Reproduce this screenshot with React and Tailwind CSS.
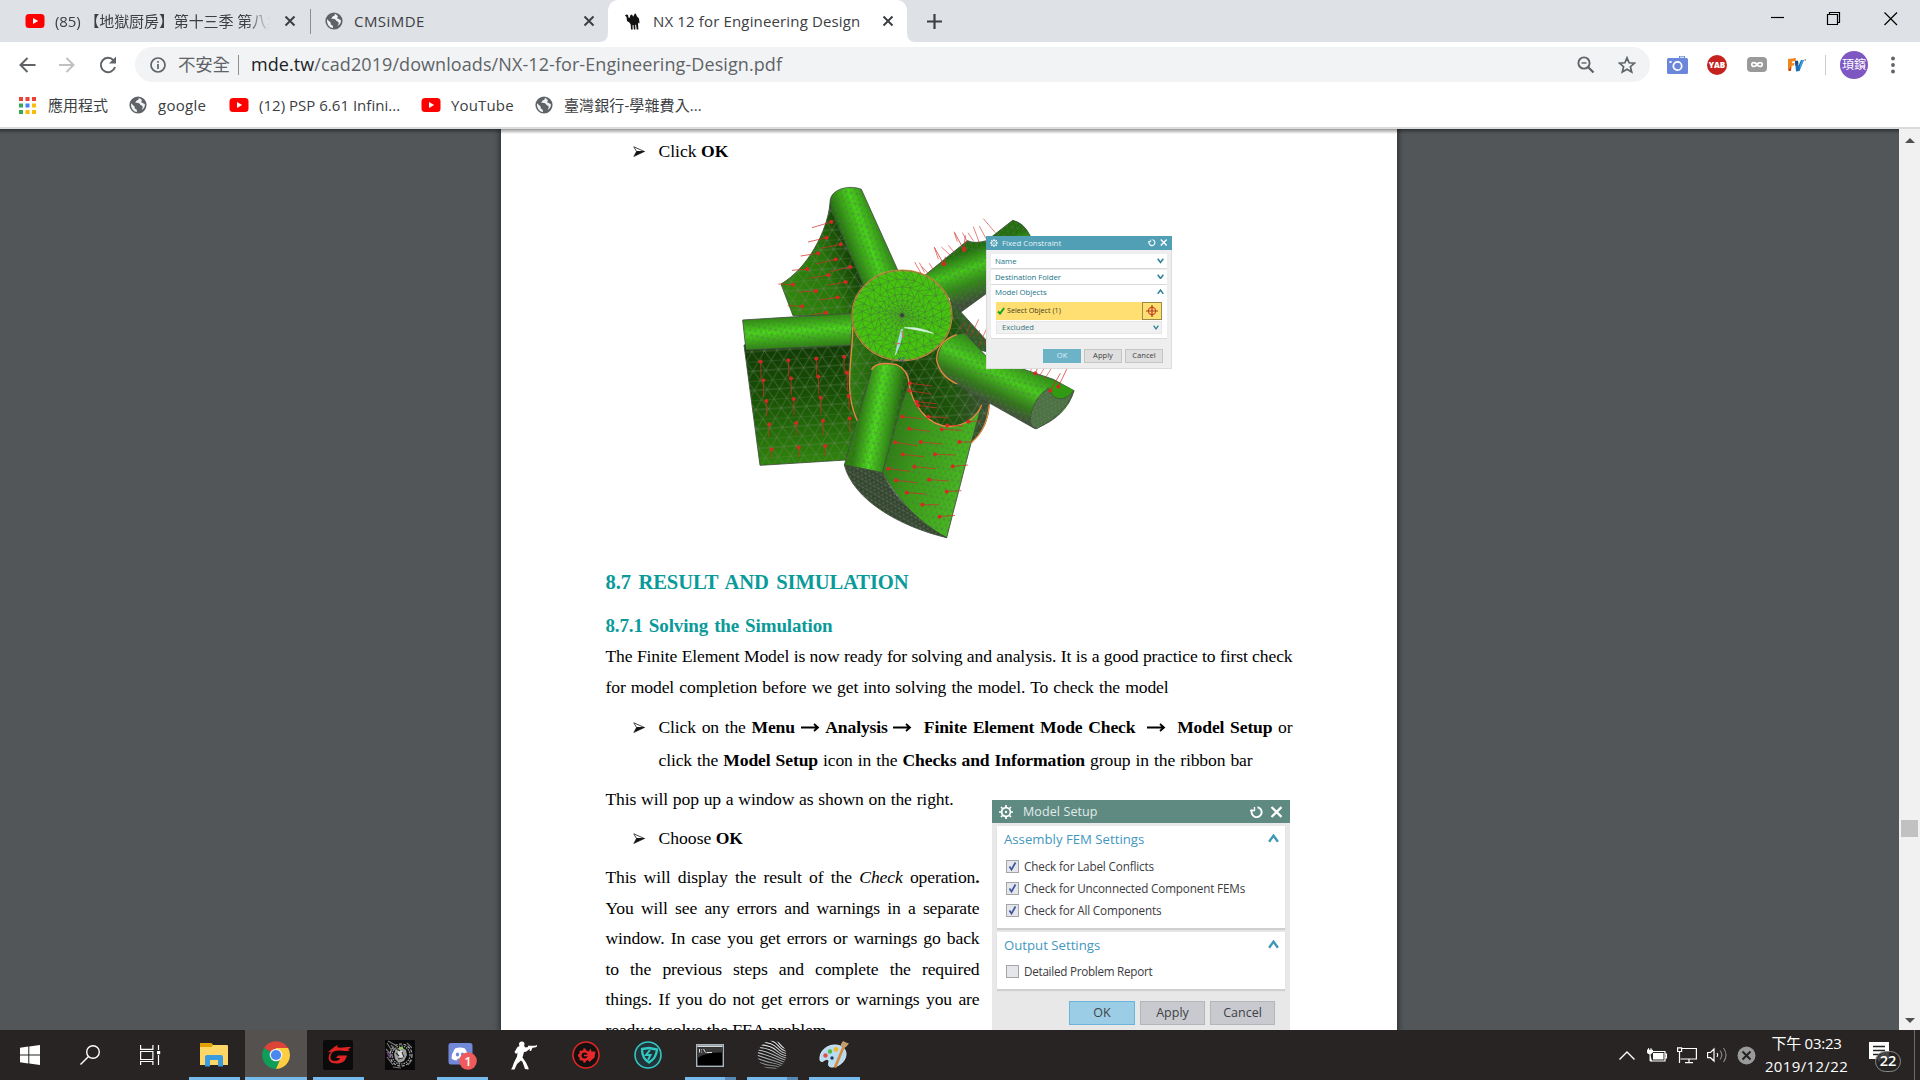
import React from "react";

/* ---------- shared icons ---------- */

const YouTube = ({ className = "" }) => (
  <svg className={className} width="20" height="16" viewBox="0 0 20 16">
    <rect x="0.5" y="1" width="19" height="14" rx="3.5" fill="#f00" />
    <path d="M8 5l5.2 3L8 11z" fill="#fff" />
  </svg>
);

const Globe = ({ className = "" }) => (
  <svg className={className} width="18" height="18" viewBox="0 0 18 18">
    <circle cx="9" cy="9" r="8.6" fill="#5f6368" />
    <path d="M2 7.2l3.6 3.4.2 2 2 1.2.2 2.2C4.2 15.600 1.600 12 2 7.200z" fill="#f1f3f4" />
    <path d="M9.500 1.800c1 1.200-.2 2.400-1.800 2.800-.8.300-.6 1.600-1.700 1.900 2 .5 4.600.3 5.200 2 .4 1.200 2.600.8 2.500 2.400-.1 1.500-1 2.500-1.600 3.300 2.800-1.300 4-3.700 3.800-6-1.100-.2-1.600-1.300-2.800-1.400-1.200-.2-1-1.500-.1-2.100-.9-1.700-2-2.500-3.500-2.900z" fill="#f1f3f4" />
  </svg>
);

const Close = ({ className = "" }) => (
  <svg className={className} width="12" height="12" viewBox="0 0 12 12">
    <path d="M1.500 1.500l9 9M10.500 1.500l-9 9" stroke="#3c4043" strokeWidth="2" fill="none" />
  </svg>
);

const Camel = ({ className = "" }) => (
  <svg className={className} width="15" height="17" viewBox="0 0 15 17">
    <path d="M0 2.500L1 1.500l2 .5.500 2.500 1 .5L5.500 2 7 1.500l1.200 2.200L9.800.5l1 .3L12 3.500l2 2 .6 5-1.100-1L13 11l.4 5.500h-1.700L11 11.500l-.8.500.2 4.500H8.800l-.3-4.500-1 .2.200 4.300H6l-.3-5-1.300-2L2 8 1.500 4z" fill="#111" />
  </svg>
);

/* ---------- browser chrome ---------- */

function TabStrip() {
  return (
    <div className="flex h-[42px] items-center bg-[#dee1e6] text-[15px] text-[#3c4043]">
      <div className="flex h-full w-[310px] shrink-0 items-center pl-[25px]">
        <YouTube />
        <div className="ml-[10px] w-[222px] overflow-hidden whitespace-nowrap tracking-[-0.1px] [mask-image:linear-gradient(to_right,#000_86%,transparent_97%)]">
          (85) 【地獄厨房】第十三季 第八集
        </div>
        <Close className="ml-[7px]" />
      </div>
      <div className="h-[25px] w-px bg-[#8b8f94]" />
      <div className="flex h-full w-[297px] shrink-0 items-center pl-[14px]">
        <Globe />
        <span className="ml-[11px] tracking-[0.45px]">CMSiMDE</span>
        <Close className="mr-[13px] ml-auto" />
      </div>
      <div className="relative flex h-full w-[299px] shrink-0 items-center rounded-t-[10px] bg-white pl-[17px]">
        <svg className="absolute bottom-0 -left-[9px]" width="9" height="9" viewBox="0 0 9 9"><path d="M9 0v9H0Q9 9 9 0z" fill="#fff" /></svg>
        <svg className="absolute -right-[9px] bottom-0" width="9" height="9" viewBox="0 0 9 9"><path d="M0 0v9h9Q0 9 0 0z" fill="#fff" /></svg>
        <Camel />
        <span className="ml-[13px] whitespace-nowrap tracking-[0.15px]">NX 12 for Engineering Design</span>
        <Close className="mr-[13px] ml-auto" />
      </div>
      <svg className="ml-[20px]" width="15" height="15" viewBox="0 0 15 15">
        <path d="M7.500 0v15M0 7.500h15" stroke="#3c4043" strokeWidth="2.200" />
      </svg>
      <svg className="mr-[22px] ml-auto h-[42px]" width="128" height="42" viewBox="0 0 128 42" fill="none" stroke="#000" strokeWidth="1.200">
        <path d="M1 17.500h13" />
        <path d="M57.500 14.500h10v10h-10zM59.500 14.500v-2h10v10h-2" />
        <path d="M114.500 12.500l12.500 12.500M127 12.500L114.500 25" />
      </svg>
    </div>
  );
}

function Toolbar() {
  return (
    <div className="flex h-[45px] shrink-0 items-center bg-white">
      <svg className="ml-[18px]" width="102" height="20" viewBox="0 0 102 20" fill="none" strokeWidth="2">
        <path d="M17.500 10H3M9.500 3L2.500 10l7 7" stroke="#5f6368" />
        <path d="M41 10h14.500M48.500 3l7 7-7 7" stroke="#bfc1c3" />
        <path d="M95.500 5.300A7.200 7.200 0 1 0 97 12" stroke="#5f6368" />
        <path d="M98 1.500v7h-7z" fill="#5f6368" />
      </svg>
      <div className="ml-[15px] flex h-[35px] w-[1515px] shrink-0 items-center rounded-full bg-[#f1f3f4] pl-[15px] text-[18px] text-[#5f6368]">
        <svg width="16" height="16" viewBox="0 0 16 16" fill="none" stroke="#5f6368" strokeWidth="1.700">
          <circle cx="8" cy="8" r="7" />
          <path d="M8 7v5M8 4v1.700" />
        </svg>
        <span className="ml-[12px] w-[53px] text-[17.500px] tracking-[-0.2px] whitespace-nowrap">不安全</span>
        <span className="ml-[7px] h-[20px] w-px bg-[#8b8f94]" />
        <span className="ml-[12px] whitespace-nowrap tracking-[0.08px]">
          <span className="text-[#202124]">mde.tw</span>/cad2019/downloads/NX-12-for-Engineering-Design.pdf
        </span>
        <svg className="mr-[23px] ml-auto" width="18" height="18" viewBox="0 0 18 18" fill="none" stroke="#5f6368" strokeWidth="1.900">
          <circle cx="7" cy="7" r="5.600" />
          <path d="M11 11l5.500 5.500" strokeWidth="2.300" />
          <path d="M4.500 7h5" strokeWidth="1.400" />
        </svg>
        <svg className="mr-[14px]" width="18" height="18" viewBox="0 0 18 18" fill="none" stroke="#5f6368" strokeWidth="1.700">
          <path d="M9 1.800l2.100 5 5.400.4-4.100 3.500 1.300 5.300L9 13.200 4.300 16l1.300-5.300L1.500 7.200l5.400-.4z" />
        </svg>
      </div>
      <svg className="ml-[17px]" width="21" height="18" viewBox="0 0 21 18">
        <path d="M12 0h6v3h-6z" fill="#6a8de0" />
        <rect x="0" y="2" width="21" height="16" rx="1.500" fill="#6b87dc" />
        <path d="M13 1.200h4" stroke="#fff" strokeWidth="1" />
        <circle cx="10.500" cy="10" r="4.200" fill="none" stroke="#fff" strokeWidth="1.700" />
        <rect x="2.500" y="5" width="2" height="2" fill="#fff" />
      </svg>
      <span className="ml-[19px] flex h-[20px] w-[20px] items-center justify-center rounded-full bg-[#c5221f] text-[8px] font-extrabold text-white">YAB</span>
      <svg className="ml-[20px]" width="20" height="15" viewBox="0 0 20 15">
        <rect width="20" height="15" rx="4" fill="#9a9a9a" />
        <path d="M10 7.500C8.500 5 4.800 4.800 4.800 7.500S8.500 10 10 7.500s5.200-2.700 5.200 0S11.500 10 10 7.500z" fill="none" stroke="#fff" strokeWidth="1.700" />
      </svg>
      <svg className="ml-[21px]" width="18" height="14" viewBox="0 0 18 14">
        <path d="M0 1l8-1-.3 3-3.500.4-.2 1.800 2.500-.2-.4 2.500-2.500.2L3 13 0 12.500z" fill="#f0861f" />
        <path d="M3.300 8l-.5 5-2.500-.4z" fill="#c23b1a" />
        <path d="M7 3l3-.3.400 5L13 2h3l-4.500 11-3.500.5z" fill="#1b6fb5" />
        <path d="M7 3l3-.3.300 3L7.500 8z" fill="#174d85" />
        <path d="M11.500 9L14 2h2l-4 9z" fill="#46a5dc" />
        <path d="M16.500 2H18" stroke="#555" />
      </svg>
      <span className="ml-[19px] h-[20px] w-px bg-[#c9cbce]" />
      <span className="ml-[14px] flex h-[28px] w-[28px] items-center justify-center overflow-hidden rounded-full bg-[#7e57c2] text-[12px] whitespace-nowrap text-white">頊鑌</span>
      <svg className="ml-[23px]" width="4" height="18" viewBox="0 0 4 18" fill="#5f6368">
        <circle cx="2" cy="2.500" r="1.900" /><circle cx="2" cy="9" r="1.900" /><circle cx="2" cy="15.500" r="1.900" />
      </svg>
    </div>
  );
}

function Bookmarks() {
  return (
    <div className="flex h-[40px] shrink-0 items-center bg-white pb-[4px] text-[15px] whitespace-nowrap text-[#3c4043]">
      <svg className="ml-[19px]" width="17" height="17" viewBox="0 0 17 17">
        <path d="M0 0h4v4H0zM6.500 0h4v4h-4zM13 0h4v4h-4z" fill="#ea4335" />
        <path d="M0 6.500h4v4H0zM0 13h4v4H0z" fill="#34a853" />
        <path d="M6.500 6.500h4v4h-4z" fill="#4285f4" />
        <path d="M13 6.500h4v4h-4zM6.500 13h4v4h-4zM13 13h4v4h-4z" fill="#fbbc05" />
      </svg>
      <span className="ml-[12px] w-[60px]">應用程式</span>
      <Globe className="ml-[21px]" />
      <span className="ml-[11px] w-[51px] tracking-[0.3px]">google</span>
      <YouTube className="ml-[20px]" />
      <span className="ml-[10px] w-[142px] tracking-[0.02px]">(12) PSP 6.61 Infini...</span>
      <YouTube className="ml-[20px]" />
      <span className="ml-[10px] w-[64px] tracking-[0.15px]">YouTube</span>
      <Globe className="ml-[20px]" />
      <span className="ml-[11px] tracking-[0.1px]">臺灣銀行-學雜費入...</span>
    </div>
  );
}

/* ---------- fan model figure ---------- */

const rings = [
  [0, 1], [9, 10], [20, 14], [33, 18], [50, 20], [70, 22], [94, 24], [120, 28], [149, 36],
];

function discMesh() {
  const point = (ring, i) => {
    const [r, n] = rings[ring];
    const a = ((i + (ring % 2) * 0.5) / n) * Math.PI * 2;
    return [546 + r * Math.cos(a), 436 + r * 0.905 * Math.sin(a)];
  };
  let d = "";
  for (let k = 1; k < rings.length; k++) {
    const n = rings[k][1];
    const inner = rings[k - 1][1];
    for (let i = 0; i < n; i++) {
      const p = point(k, i);
      const q = point(k, i + 1);
      d += `M${p[0].toFixed(1)} ${p[1].toFixed(1)}L${q[0].toFixed(1)} ${q[1].toFixed(1)}`;
      const t = (i / n) * inner;
      for (const j of [Math.floor(t), Math.ceil(t + 0.01)]) {
        const s = point(k - 1, j);
        d += `M${p[0].toFixed(1)} ${p[1].toFixed(1)}L${s[0].toFixed(1)} ${s[1].toFixed(1)}`;
      }
    }
  }
  return d;
}
const DISC = discMesh();

/* Each load arrow: head x, head y, tail dx, tail dy */
const loads = [
  [334, 156, -58, 17], [320, 203, -56, 13], [362, 223, -60, 12], [294, 250, -52, 8], [347, 268, -58, 14],
  [262, 297, -46, 4], [391, 291, -60, 14], [326, 315, -58, 10], [219, 344, -44, -2], [377, 336, -56, 10],
  [288, 363, -52, 3], [353, 382, -56, 8], [247, 409, -44, -2], [318, 428, -40, 6],
  [122, 575, 1, 50], [205, 571, 1, 50], [289, 566, 1, 52], [372, 560, 1, 52],
  [130, 631, 1, 50], [213, 625, 1, 52], [295, 620, 1, 54], [381, 608, 2, 56],
  [139, 693, 1, 46], [221, 687, 1, 48], [302, 683, 1, 50], [386, 678, 1, 42],
  [148, 763, -2, 38], [229, 759, 0, 38], [309, 752, 0, 44], [389, 745, 1, 40],
  [155, 838, 0, 28], [236, 832, 0, 30], [316, 828, 0, 30],
  [570, 640, 66, 8], [568, 662, 66, 10], [590, 695, 58, 6], [594, 706, 58, 8],
  [547, 740, 60, 6], [625, 740, 60, 4], [568, 776, 62, 8], [682, 766, 50, 2], [665, 778, 60, 3],
  [526, 817, 66, 10], [602, 816, 66, 6], [718, 816, 40, 0], [548, 853, 64, 7], [645, 853, 62, 2],
  [505, 896, 66, 8], [583, 890, 64, 6], [698, 889, 46, -4], [528, 931, 62, 7], [627, 929, 60, 4],
  [560, 968, 58, 4], [680, 965, 44, -3], [607, 1004, 50, 0], [659, 1040, 46, -4], [745, 755, 38, -3],
  [671, 282, -28, -50], [732, 240, -28, -52], [672, 282, 4, -22], [732, 236, 4, -40],
  [946, 610, 8, -18], [991, 662, 30, -52], [1015, 650, 26, -54],
];

const bristles =
  "M604 312l-20-36M614 308l-16-30M626 312l-20-22M640 300l-12-20M655 268l-12-36M690 255l-26-24M705 250l-20-24M712 215l-10-30M745 220l-18-32M760 212l-16-24M778 218l-18-48M798 206l-20-38M826 188l-36-42M722 478l12-22M738 495l14-38M752 500l24-52M775 530l24-52M792 525l10-22M930 605l8-14M958 618l14-22M975 625l18-28M770 500l10-20";

function Face({ d, fill, mesh = "mesh", stroke = "#3e4a3c" }) {
  return (
    <g>
      <path d={d} fill={fill} stroke={stroke} strokeWidth="2.500" strokeLinejoin="round" />
      <path d={d} fill={`url(#${mesh})`} />
    </g>
  );
}

function FanModel() {
  return (
    <svg className="absolute inset-0" width="480" height="380" viewBox="0 0 1440 1140">
      <defs>
        <pattern id="mesh" width="17" height="30" patternUnits="userSpaceOnUse" patternTransform="rotate(12)">
          <path d="M0 0H17M0 15H17M0 0L8.500 15L17 0M8.500 15L0 30M8.500 15L17 30" stroke="#55704f" strokeWidth="2" fill="none" opacity=".62" />
        </pattern>
        <pattern id="meshWide" width="38" height="58" patternUnits="userSpaceOnUse" patternTransform="rotate(-4)">
          <path d="M0 0H38M0 29H38M0 0L19 29L38 0M19 29L0 58M19 29L38 58" stroke="#6a8560" strokeWidth="2.200" fill="none" opacity=".7" />
        </pattern>
        <pattern id="meshTight" width="14" height="20" patternUnits="userSpaceOnUse" patternTransform="rotate(30)">
          <path d="M0 0H14M0 10H14M0 0L14 20M14 0L0 20" stroke="#717a6e" strokeWidth="1.600" fill="none" opacity=".7" />
        </pattern>
        <linearGradient id="topCyl" gradientUnits="userSpaceOnUse" x1="365" y1="220" x2="480" y2="175">
          <stop offset="0" stopColor="#1a5a08" /><stop offset=".35" stopColor="#34a80f" /><stop offset=".62" stopColor="#46dc14" /><stop offset="1" stopColor="#2d8d10" />
        </linearGradient>
        <linearGradient id="topFlat" gradientUnits="userSpaceOnUse" x1="200" y1="340" x2="400" y2="270">
          <stop offset="0" stopColor="#31850c" /><stop offset=".6" stopColor="#27760a" /><stop offset="1" stopColor="#143f06" />
        </linearGradient>
        <linearGradient id="rightCyl" gradientUnits="userSpaceOnUse" x1="720" y1="250" x2="770" y2="390">
          <stop offset="0" stopColor="#1f6f08" /><stop offset=".35" stopColor="#42cf14" /><stop offset=".65" stopColor="#2e8a10" /><stop offset="1" stopColor="#3c4a37" />
        </linearGradient>
        <linearGradient id="leftCyl" gradientUnits="userSpaceOnUse" x1="230" y1="440" x2="236" y2="545">
          <stop offset="0" stopColor="#2b8a0c" /><stop offset=".4" stopColor="#48dd16" /><stop offset="1" stopColor="#216a09" />
        </linearGradient>
        <linearGradient id="leftFlat" gradientUnits="userSpaceOnUse" x1="230" y1="530" x2="245" y2="880">
          <stop offset="0" stopColor="#123b05" /><stop offset=".4" stopColor="#184f05" /><stop offset="1" stopColor="#2f850c" />
        </linearGradient>
        <linearGradient id="hub" gradientUnits="userSpaceOnUse" x1="390" y1="0" x2="800" y2="0">
          <stop offset="0" stopColor="#2d7a10" /><stop offset=".4" stopColor="#164306" /><stop offset=".75" stopColor="#1d540a" /><stop offset="1" stopColor="#3c4f34" />
        </linearGradient>
        <linearGradient id="lowRight" gradientUnits="userSpaceOnUse" x1="870" y1="560" x2="800" y2="700">
          <stop offset="0" stopColor="#2a8a0c" /><stop offset=".4" stopColor="#46d518" /><stop offset=".75" stopColor="#2d7a12" /><stop offset="1" stopColor="#404a3c" />
        </linearGradient>
        <linearGradient id="bottomCyl" gradientUnits="userSpaceOnUse" x1="420" y1="740" x2="540" y2="760">
          <stop offset="0" stopColor="#277e08" /><stop offset=".4" stopColor="#4be219" /><stop offset=".75" stopColor="#2e950d" /><stop offset="1" stopColor="#184f05" />
        </linearGradient>
        <linearGradient id="bottomFlat" gradientUnits="userSpaceOnUse" x1="510" y1="760" x2="750" y2="830">
          <stop offset="0" stopColor="#27780c" /><stop offset=".4" stopColor="#349e10" /><stop offset="1" stopColor="#45bc1b" />
        </linearGradient>
      </defs>

      <Face d="M330 100C322 185 262 296 183 342L219 437H420L470 330L380 180z" fill="url(#topFlat)" mesh="meshWide" />
      <Face d="M330 98C330 52 395 45 424 58L534 302C490 306 452 326 432 350L335 125z" fill="url(#topCyl)" />
      <Face d="M612 318L742 212Q765 222 800 212L878 151Q912 158 932 200L800 300V370L712 434L690 385z" fill="url(#rightCyl)" />
      <Face d="M690 390L800 512V545L700 520z" fill="#2d5a22" />
      <Face d="M72 525L120 886L378 870L412 750L392 480z" fill="url(#leftFlat)" mesh="meshWide" />
      <Face d="M68 450L395 430L402 525L78 540z" fill="url(#leftCyl)" />
      <Face d="M398 450L385 620Q390 700 412 752L560 800L760 812Q806 770 808 700L790 560L696 420z" fill="url(#hub)" mesh="meshWide" />
      <Face d="M698 495Q655 520 652 570Q655 615 712 645L945 776Q1040 740 1062 662L1000 628L800 560L735 490z" fill="url(#lowRight)" />
      <path d="M985 655Q1005 625 1062 662Q1020 712 1000 680z" fill="#2f9a12" />
      <Face d="M985 655L1000 680Q1030 700 1062 662Q1035 735 950 776Q925 770 932 735Q945 680 985 655z" fill="#47713c" mesh="meshTight" />
      <Face d="M564 600C560 690 610 768 690 770C740 765 770 740 785 705L755 812L680 1103C600 1070 530 980 485 905z" fill="url(#bottomFlat)" />
      <Face d="M373 885C400 990 540 1070 680 1103C600 1060 520 980 487 908C440 890 400 880 373 885z" fill="#2e4129" mesh="meshTight" />
      <Face d="M458 592Q480 575 530 585Q562 600 567 640L545 700L487 908Q430 895 373 885z" fill="url(#bottomCyl)" />

      <g fill="none" stroke="#e6893f" strokeWidth="4">
        <path d="M398 470C400 560 368 660 412 752M455 600Q465 572 530 584Q565 600 567 640C575 700 620 768 690 770C740 766 772 738 785 705M710 494Q650 515 650 570Q660 620 712 642M808 705Q800 780 756 816" />
      </g>
      <ellipse cx="546" cy="436" rx="149" ry="135" fill="#45c40d" stroke="#e08a3e" strokeWidth="5" />
      <path d={DISC} stroke="#467c38" strokeWidth="1.700" fill="none" />
      <circle cx="546" cy="436" r="6" fill="#3c3c3c" />
      <path d="M553 473Q600 470 640 490Q595 480 553 473z" fill="#d5f2df" stroke="#d5f2df" strokeWidth="2" />
      <path d="M544 478Q532 520 526 556L537 530Q546 505 548 478z" fill="#9fd7f0" stroke="#b9e6f5" strokeWidth="2" />
      <path d="M545 482l6 16-5 5M526 522l14-2" stroke="#c77b5f" strokeWidth="4" fill="none" />
      <path d="M534 563l8 10M542 563l-8 10M546 563h8l-8 10h8" stroke="#2b4ea8" strokeWidth="2" fill="none" />

      <g stroke="#cf2f28" fill="#e0241f" strokeWidth="2.200">
        {loads.map(([x, y, dx, dy], i) => (
          <g key={i}>
            <path d={`M${x} ${y}l${dx} ${dy}`} />
            <circle cx={x} cy={y} r="5" />
          </g>
        ))}
        <path d={bristles} strokeWidth="1.800" fill="none" />
      </g>
    </svg>
  );
}

/* ---------- dialogs inside the document ---------- */

const Gear = ({ size }) => (
  <svg width={size} height={size} viewBox="0 0 14 14" fill="none" stroke="#fff">
    <circle cx="7" cy="7" r="4.400" strokeWidth="1.700" />
    <circle cx="7" cy="7" r="1.200" fill="#fff" stroke="none" />
    <path d="M7 0v2M7 12v2M0 7h2M12 7h2M2 2l1.500 1.500M10.500 10.500L12 12M12 2l-1.500 1.500M3.500 10.500L2 12" strokeWidth="1.700" />
  </svg>
);

const ResetAndClose = ({ className = "", width }) => (
  <svg className={className} width={width} height={(width * 12) / 32} viewBox="0 0 32 12" fill="none" stroke="#fff">
    <path d="M2.200 3.800A5 5 0 1 0 7.500 1.200" strokeWidth="1.900" />
    <path d="M0 4.500h4.500V1" strokeWidth="1.400" />
    <path d="M21.500 1l10 10M31.500 1l-10 10" strokeWidth="2.300" />
  </svg>
);

const Chevron = ({ up, size, color, className = "" }) => (
  <svg className={className} width={size} height={size * 0.8} viewBox="0 0 10 8" fill="none" stroke={color} strokeWidth="2.200">
    <path d={up ? "M1 7l4-5.500L9 7" : "M1 1l4 5.500L9 1"} />
  </svg>
);

function SmallRow({ children, up }) {
  return (
    <div className="flex h-[14px] items-center justify-between pr-[3px] pl-[4px] text-[7.800px] tracking-[-0.05px] leading-[14px] text-[#237388]">
      <span>{children}</span>
      <Chevron up={up} size={7} color="#2f8497" />
    </div>
  );
}

function FixedConstraint() {
  const button = "flex h-[14px] w-[38px] items-center justify-center border text-[7.600px]";
  return (
    <div className="absolute top-[66px] left-[266px] h-[133px] w-[186px] border border-[#dcdcdc] bg-[#eeeeee]">
      <div className="-mx-px -mt-px flex h-[14px] items-center bg-[#519fb5] pl-[4px] text-[7.800px] text-[#e4f2f5]">
        <Gear size={8} />
        <span className="ml-[4px] pt-px">Fixed Constraint</span>
        <ResetAndClose className="mr-[5px] ml-auto" width={19} />
      </div>
      <div className="mx-[4px] mt-[4px] bg-white shadow-[0_1px_0_#dadada]"><SmallRow>Name</SmallRow></div>
      <div className="mx-[4px] mt-[1.500px] bg-white shadow-[0_1px_0_#dadada]"><SmallRow>Destination Folder</SmallRow></div>
      <div className="mx-[4px] mt-[1.500px] h-[53px] bg-white shadow-[0_1px_0_#dadada]">
        <SmallRow up>Model Objects</SmallRow>
        <div className="mx-[5px] mt-[3px] flex h-[18px] bg-[#ffdf71]">
          <div className="flex w-[146px] items-center pl-[1px] text-[7.200px] text-[#3f3b20]">
            <svg width="8" height="8" viewBox="0 0 8 8"><path d="M1 4.500L3 6.500 7.200 1" fill="none" stroke="#12a52c" strokeWidth="2" /></svg>
            <span className="ml-[2px]">Select Object (1)</span>
          </div>
          <div className="flex grow items-center justify-center border border-[#9c8a48]">
            <svg width="12" height="12" viewBox="0 0 12 12" fill="none">
              <circle cx="6" cy="6" r="3.600" stroke="#e0402a" strokeWidth="1.200" />
              <path d="M6 0v12M0 6h12" stroke="#a04318" strokeWidth="1.200" />
            </svg>
          </div>
        </div>
        <div className="mx-[5px] mt-[1px] flex h-[13px] items-center justify-between border border-[#e6e6e6] bg-[#f1f1f1] pr-[2px] pl-[5px] text-[7.600px] text-[#37727f]">
          Excluded
          <Chevron size={6} color="#2f8497" />
        </div>
      </div>
      <div className="mt-[11px] mr-[8px] flex justify-end gap-[3px] text-[#3d3d3d]">
        <div className={`${button} border-[#6db3c8] bg-[#6db3c8] text-[#dceff5]`}>OK</div>
        <div className={`${button} border-[#c4c4c4] bg-[#dfdfdf]`}>Apply</div>
        <div className={`${button} border-[#c4c4c4] bg-[#dfdfdf]`}>Cancel</div>
      </div>
    </div>
  );
}

function Check({ checked, children, className = "" }) {
  return (
    <div className={`flex h-[22px] items-center ${className}`}>
      <span className="flex h-[13px] w-[13px] items-center justify-center border border-[#a5a5a5] bg-[#e4e6ec]">
        {checked && (
          <svg width="11" height="11" viewBox="0 0 11 11"><path d="M2.500 5.500l2 3.200L8.500 1.500" stroke="#3d55a0" strokeWidth="1.700" fill="none" /></svg>
        )}
      </span>
      <span className="ml-[5px]">{children}</span>
    </div>
  );
}

function ModelSetup() {
  const button = "flex h-[24px] items-center justify-center border text-[12.500px] text-[#3f4145]";
  return (
    <div className="h-[236px] w-[298px] shrink-0 bg-[#e8e8e8] font-['Open_Sans','Noto_Sans',sans-serif] tracking-normal whitespace-nowrap">
      <div className="flex h-[23px] items-center bg-[#5e8a82] pl-[7px] text-[12.500px] tracking-[0.1px] text-[#e3ecea]">
        <Gear size={14} />
        <span className="ml-[10px]">Model Setup</span>
        <ResetAndClose className="mr-[8px] ml-auto" width={32} />
      </div>
      <div className="mx-[5px] mt-[3px] h-[102px] bg-white shadow-[0_2px_1px_#cfcfcf]">
        <div className="flex h-[25px] items-center justify-between pr-[6px] pl-[7px] text-[13.200px] tracking-[0px] text-[#4397bf]">
          Assembly FEM Settings
          <Chevron up size={11} color="#3f97b8" />
        </div>
        <div className="mt-[4px] pl-[9px] text-[11.700px] tracking-[-0.15px] text-[#3b3b41]">
          <Check checked>Check for Label Conflicts</Check>
          <Check checked>Check for Unconnected Component FEMs</Check>
          <Check checked>Check for All Components</Check>
        </div>
      </div>
      <div className="mx-[5px] mt-[4px] h-[57px] bg-white shadow-[0_2px_1px_#cfcfcf]">
        <div className="flex h-[25px] items-center justify-between pr-[6px] pl-[7px] text-[13.200px] tracking-[0px] text-[#4397bf]">
          Output Settings
          <Chevron up size={11} color="#3f97b8" />
        </div>
        <Check className="mt-[3px] pl-[9px] text-[11.700px] tracking-[-0.27px] text-[#3b3b41]">Detailed Problem Report</Check>
      </div>
      <div className="mt-[12px] flex justify-end gap-[5px] pr-[15px]">
        <div className={`${button} w-[66px] border-[#6bb3d8] bg-[#9ccde6]`}>OK</div>
        <div className={`${button} w-[65px] border-[#b4b6b9] bg-[#c9cacf]`}>Apply</div>
        <div className={`${button} w-[65px] border-[#b4b6b9] bg-[#c9cacf]`}>Cancel</div>
      </div>
    </div>
  );
}

/* ---------- document ---------- */

const Bullet = () => (
  <svg className="mr-[14px] ml-[27px] shrink-0 self-center" width="12" height="11" viewBox="0 0 12 11">
    <path d="M.8.800L11.300 5.500H3.500z" fill="#fff" stroke="#333" strokeWidth=".9" />
    <path d="M.8 10.500L11.500 5.500H3.500z" fill="#111" stroke="#111" strokeWidth=".6" />
  </svg>
);

const Arrow = () => (
  <svg className="mb-[2px] inline-block" width="19" height="9" viewBox="0 0 19 9">
    <path d="M0 4.500h16M13 1l4 3.500-4 3.500" fill="none" stroke="#000" strokeWidth="1.800" />
  </svg>
);

const Line = ({ children, className = "" }) => (
  <div className={`h-[30px] whitespace-nowrap ${className}`}>{children}</div>
);

const JUSTIFY = "[text-align-last:justify]";

function Document() {
  return (
    <div className="h-full w-[896px] shrink-0 overflow-hidden bg-white pt-[7px] pl-[104.500px] font-['Liberation_Serif','Times_New_Roman',serif] text-[17.600px] leading-[30px] tracking-[-0.13px] text-black shadow-[0_0_5px_2px_rgba(0,0,0,0.4)]">
      <Line className="flex"><Bullet /><span className="tracking-normal">Click <b>OK</b></span></Line>
      <div className="relative mt-[4px] ml-[114.500px] h-[380px] w-[480px] font-['Open_Sans','Noto_Sans',sans-serif] leading-none tracking-normal whitespace-nowrap">
        <FanModel />
        <FixedConstraint />
      </div>
      <Line className={`mt-[17px] w-[303px] text-[20.600px] font-bold text-[#0a9a9a] ${JUSTIFY}`}>8.7 RESULT AND SIMULATION</Line>
      <Line className={`mt-[14px] w-[227px] text-[19px] font-bold text-[#0a9a9a] ${JUSTIFY}`}>8.7.1 Solving the Simulation</Line>
      <Line className={`w-[687px] ${JUSTIFY}`}>The Finite Element Model is now ready for solving and analysis. It is a good practice to first check</Line>
      <Line className={`mt-[1px] w-[563px] ${JUSTIFY}`}>for model completion before we get into solving the model. To check the model</Line>
      <Line className="mt-[10px] flex">
        <Bullet />
        <span className={`w-[634px] ${JUSTIFY}`}>
          Click on the <b>Menu</b> <Arrow /> <b>Analysis</b> <Arrow />&nbsp; <b>Finite Element Mode Check</b> &nbsp;<Arrow />&nbsp; <b>Model Setup</b> or
        </span>
      </Line>
      <Line className={`mt-[3px] ml-[53px] w-[594px] ${JUSTIFY}`}>
        click the <b>Model Setup</b> icon in the <b>Checks and Information</b> group in the ribbon bar
      </Line>
      <div className="mt-[9px] flex">
        <div className="w-[374px]">
          <Line className={`w-[348px] ${JUSTIFY}`}>This will pop up a window as shown on the right.</Line>
          <Line className="mt-[9px] flex"><Bullet /><span className="tracking-normal">Choose <b>OK</b></span></Line>
          <Line className={`mt-[9px] ${JUSTIFY}`}>This will display the result of the <i>Check</i> operation<b>.</b></Line>
          <Line className={`mt-[1px] ${JUSTIFY}`}>You will see any errors and warnings in a separate</Line>
          <Line className={JUSTIFY}>window. In case you get errors or warnings go back</Line>
          <Line className={`mt-[1px] ${JUSTIFY}`}>to the previous steps and complete the required</Line>
          <Line className={JUSTIFY}>things. If you do not get errors or warnings you are</Line>
          <Line className={`mt-[1px] w-[225px] ${JUSTIFY}`}>ready to solve the FEA problem.</Line>
        </div>
        <div className="mt-[16px] ml-[12.500px]"><ModelSetup /></div>
      </div>
    </div>
  );
}

function Scrollbar() {
  return (
    <div className="flex w-[21px] shrink-0 flex-col items-center bg-[#f1f1f1]">
      <svg className="mt-[9px]" width="10" height="5" viewBox="0 0 10 5"><path d="M0 5L5 0l5 5z" fill="#505050" /></svg>
      <div className="mt-[677px] h-[17px] w-[17px] bg-[#c1c1c1]" />
      <svg className="mt-auto mb-[7px]" width="10" height="5" viewBox="0 0 10 5"><path d="M0 0l5 5 5-5z" fill="#505050" /></svg>
    </div>
  );
}

/* ---------- taskbar ---------- */

function Slot({ children, running, active, stacked }) {
  return (
    <div className={`flex h-full w-[62px] flex-col items-center ${active ? "bg-[#55514f]" : ""}`}>
      <div className="flex h-[47px] w-full items-center justify-center pt-[3px]">{children}</div>
      {running && (
        <div className={`flex h-[3px] ${active ? "w-full" : "w-[51px]"}`}>
          <span className="grow bg-[#76b9ed]" />
          {stacked && <span className="w-[11px] bg-[#5689b3]" />}
        </div>
      )}
    </div>
  );
}

const sphereStripes = Array.from({ length: 13 }, (_, i) => {
  const y = -1 + i * 2.6;
  const lift = 7 - i * 0.9;
  return `M-1 ${y.toFixed(1)}Q10 ${(y - lift).toFixed(1)} 18 ${y.toFixed(1)}T32 ${(y + 1).toFixed(1)}`;
}).join("");

function Taskbar() {
  return (
    <div className="flex h-[50px] shrink-0 bg-[#272423] text-white">
      <div className="flex w-[60px] items-center justify-center">
        <svg width="20" height="20" viewBox="0 0 20 20" fill="#fff">
          <path d="M0 2.700L8.300 1.500v8H0zM9.300 1.400L20 0v9.500H9.300zM0 10.500h8.300v8L0 17.300zM9.300 10.500H20V20L9.300 18.600z" />
        </svg>
      </div>
      <div className="flex w-[60px] items-center justify-center">
        <svg width="20" height="20" viewBox="0 0 20 20" fill="none" stroke="#fff" strokeWidth="1.400">
          <circle cx="13" cy="7" r="6.300" /><path d="M8.500 11.500L.5 19.500" />
        </svg>
      </div>
      <div className="flex w-[60px] items-center justify-center">
        <svg width="21" height="20" viewBox="0 0 21 20" fill="none" stroke="#fff" strokeWidth="1.200">
          <path d="M.6 0v4.400h12.300V0M.6 20v-3.500h12.300V20M.6 6.500h12.300v8H.6zM18.500 0v5M18.500 10v10" />
          <path d="M17 6h3.200v3.200H17z" fill="#fff" stroke="none" />
        </svg>
      </div>
      <div className="ml-[3px] flex">
        <Slot running>
          <svg width="28" height="24" viewBox="0 0 28 24">
            <path d="M0 1q0-1 1-1h10l2 2h14q1 0 1 1v19H0z" fill="#ffd766" />
            <path d="M0 0h11l2 2-1.500 2H0z" fill="#e1a100" />
            <path d="M5 23.500V14q0-2 2-2h14q2 0 2 2v9.500h-5V17h-8v6.500z" fill="#3b9be0" />
          </svg>
        </Slot>
        <Slot running active>
          <svg width="28" height="28" viewBox="0 0 28 28">
            <path d="M14 14L2 7A14 14 0 0 1 26.100 7z" fill="#db4437" />
            <path d="M14 14L2 7A14 14 0 0 0 14 28l6-11z" fill="#0f9d58" />
            <path d="M14 14h6l-6 14A14 14 0 0 0 26.100 7H14z" fill="#ffcd40" />
            <circle cx="14" cy="14" r="6.300" fill="#f1f1f1" /><circle cx="14" cy="14" r="5.100" fill="#4a87ee" />
          </svg>
        </Slot>
        <Slot running>
          <svg width="30" height="30" viewBox="0 0 30 30">
            <rect width="30" height="30" rx="2" fill="#0b0b0b" />
            <path d="M4 12.500C9 9.500 10 7 15 5c-1 1.500-1 2 0 2.500C19 8 23 7 28 7c-1 1.500-2 2-3.500 2.200 1 .5 1.500.8 2.500 1-4 1.500-7 .5-10 .3-5-.2-8 1-9 4-1.500 4 0 6.500 4 6.500 3 0 4.500-1 5-3h-4l2-2.500H24c-1.500 6-5 8-10.500 8C7 23.500 4.500 20 6 15.500c.3-1.500 1-2.500 2.500-3.700-1.500 0-3 .2-4.500.7z" fill="#e02424" />
          </svg>
        </Slot>
        <Slot>
          <svg width="30" height="30" viewBox="0 0 30 30">
            <rect width="30" height="30" fill="#090909" />
            <g fill="none" stroke="#aaa" strokeWidth="1.200">
              <circle cx="16" cy="15" r="11" strokeDasharray="3 1.500" /><circle cx="16" cy="15" r="9" strokeDasharray="1.500 1" />
              <path d="M2 3l5 8M1 9l7 8M3 1l9 5M2 17l6 8M22 3l5 5M8 27l8 1M23 25l4-5M6 5l5 6" stroke="#777" />
            </g>
            <path d="M11 9l5-2 5 3 1 5-3 6-5 2-4-4-1-5z" fill="#9d9d9d" />
            <path d="M13 10l4 1 2 3-2 5-4-3z" fill="#d9d9d9" />
            <path d="M11 13l3 3M17 12l2 5M13 19l5-1M12 9l3 2" stroke="#2b2b2b" strokeWidth="1.100" />
            <path d="M14 8h4" stroke="#8ad84d" strokeWidth="1.800" /><path d="M2 12l3 6" stroke="#7a3d8d" strokeWidth="1.500" />
          </svg>
        </Slot>
        <Slot running>
          <svg width="29" height="29" viewBox="0 0 29 29">
            <path d="M3 2h19q2.500 0 2.500 2.500V26l-3-2.500H3Q.5 23.500.5 21V4.500Q.5 2 3 2z" fill="#7289da" />
            <path d="M7 7.500q5-2 10 0 3.500 5 3.500 10-2 2.300-5 2l-1.500-2h-4L8.500 19.500q-3 0-5-2 0-5 3.500-10z" fill="#fff" />
            <ellipse cx="9.500" cy="13.500" rx="1.700" ry="1.900" fill="#7289da" /><ellipse cx="14.500" cy="13.500" rx="1.700" ry="1.900" fill="#7289da" />
            <circle cx="20" cy="20" r="8.800" fill="#f05a5a" />
            <text x="20" y="24.500" textAnchor="middle" fontSize="13" fontWeight="600" fill="#fff">1</text>
          </svg>
        </Slot>
        <Slot>
          <svg width="26" height="29" viewBox="0 0 26 29" fill="#fff">
            <path d="M8 3.500Q8 .5 10.800.5T13.500 3l-.4 2 1.400 1.500L17 6V4.800h7L26 4v1.500l-2 1-2.500.3L20 10l-1.500-.2.500-2-4 3-2 .2-1.500 5.500 3.500 5L17.500 27v1.500L14 28l-2.500-7-1.500-1.500L6 23 3.500 28.500H0L1 27l2-5.500 3-6 .5-4L5 13 3.500 11l3-5L8.500 5z" />
          </svg>
        </Slot>
        <Slot>
          <svg width="28" height="28" viewBox="0 0 28 28">
            <circle cx="14" cy="14" r="13" fill="#131010" stroke="#e22525" strokeWidth="1.600" />
            <circle cx="12.500" cy="14.500" r="4.300" fill="none" stroke="#e8282a" strokeWidth="2.600" />
            <path d="M12.500 7.500v3M12.500 18.500v3M6 14.500h2.500M8 10l2 2M8 19l2-2" stroke="#e8282a" strokeWidth="2.400" />
            <path d="M16 11.500l2.500-4 1 3h4l-1 6-5 4.500-1.500-2 1.500-4z" fill="#e8282a" />
            <path d="M12 14.500h4" stroke="#e8282a" strokeWidth="1.500" />
          </svg>
        </Slot>
        <Slot>
          <svg width="28" height="28" viewBox="0 0 28 28" fill="none" stroke="#32c8c2">
            <circle cx="14" cy="14" r="13" fill="#23333a" strokeWidth="1.600" />
            <path d="M8 8l7-1 8 1.500c-.5 6-3 10-8 13C10.500 19 8 15 8 8z" strokeWidth="2.300" strokeLinejoin="round" />
            <path d="M16 9l-4 5h4.500l-2.500 5" strokeWidth="2" />
          </svg>
        </Slot>
        <Slot running stacked>
          <svg width="28" height="23" viewBox="0 0 28 23">
            <rect x=".7" y=".7" width="26.600" height="21.600" fill="#000" stroke="#a9b5bd" strokeWidth="1.400" />
            <path d="M1.400 1.400h25.200v1.800H1.400z" fill="#d4dade" />
            <path d="M1.400 3.500h25.200v5Q10 8 1.400 14z" fill="#3a3a3a" />
            <path d="M3.500 5v3.500M5.500 5.500v.8M5.500 7.700v.8M7.500 5l2 3.500M10.500 8.500h5.500" stroke="#ddd" />
          </svg>
        </Slot>
        <Slot running stacked>
          <svg width="30" height="30" viewBox="0 0 30 30">
            <defs><clipPath id="ball"><circle cx="15" cy="15" r="14.300" /></clipPath>
              <linearGradient id="ballFade" gradientUnits="userSpaceOnUse" x1="8" y1="0" x2="18" y2="30"><stop offset="0" stopColor="#fff" /><stop offset="1" stopColor="#707070" /></linearGradient></defs>
            <g clipPath="url(#ball)"><rect width="30" height="30" fill="#1c1c1c" />
              <path d={sphereStripes} fill="none" stroke="url(#ballFade)" strokeWidth="1.100" transform="rotate(18 15 15)" /></g>
          </svg>
        </Slot>
        <Slot running>
          <svg width="30" height="28" viewBox="0 0 30 28">
            <path d="M1 19C0 10 8 4 16 4c7 0 11 4 11 9 0 7-7 13-14 13-4 0-4-3-3-5 .5-3-3-3-5-1.500C3.500 21 1.500 21 1 19z" fill="#b9dcf2" stroke="#d9eefa" />
            <circle cx="6.500" cy="14.500" r="2.200" fill="#e2524b" /><circle cx="11" cy="10.500" r="2.200" fill="#55b947" /><circle cx="17" cy="8.500" r="2.400" fill="#f3b529" /><circle cx="13" cy="17" r="1.700" fill="#1d3a57" />
            <path d="M16 26.500L24.500 6" stroke="#d98a3a" strokeWidth="2.600" /><path d="M22 3l2-3 3 1.500 3 1-3 3.500-2 1-3-1.500z" fill="#c89b6a" />
          </svg>
        </Slot>
      </div>

      <div className="ml-auto flex items-center">
        <svg className="mt-px" width="16" height="9" viewBox="0 0 16 9" fill="none" stroke="#fff" strokeWidth="1.400"><path d="M.5 8.500L8 1l7.500 7.500" /></svg>
        <svg className="ml-[12px]" width="20" height="14" viewBox="0 0 20 14">
          <path d="M4.500 3.500h13.500v9.500H4.500M18 6h1.500v4H18" fill="none" stroke="#fff" strokeWidth="1.200" /><path d="M6 5h10.500v6.500H6z" fill="#fff" />
          <path d="M0 2h5.500v2.500L3.500 6h-1L0 4.500zM1.500 0v2M4 0v2M3 6v7h2" stroke="#fff" fill="#fff" strokeWidth=".9" />
        </svg>
        <svg className="ml-[10px]" width="20" height="17" viewBox="0 0 20 17" fill="none" stroke="#fff" strokeWidth="1.200">
          <path d="M5 1.500h14.400v10.500H3.500M12 12v3.500M8 15.700h8M2.500 5v11M.6.800h4v3.700h-4z" />
        </svg>
        <svg className="ml-[10px]" width="21" height="18" viewBox="0 0 21 18" fill="none" stroke="#fff" strokeWidth="1.200">
          <path d="M.6 6.500v5.200h2.900L7 15V3L3.500 6.500zM10 7q1.500 2 0 4" /><path d="M13 4.500q3.500 4.500 0 9M16.500 2q5 7 0 14" stroke="#858585" />
        </svg>
        <svg className="ml-[9px]" width="19" height="19" viewBox="0 0 19 19"><circle cx="9.500" cy="9.500" r="9" fill="#9a9a9a" /><path d="M5.500 5.500l8 8M13.500 5.500l-8 8" stroke="#222" strokeWidth="2" /></svg>
        <div className="ml-[8px] flex w-[85px] flex-col items-center text-[15px] leading-[23px] whitespace-nowrap">
          <span className="tracking-[-0.25px]">下午 03:23</span>
          <span className="tracking-[0.35px]">2019/12/22</span>
        </div>
        <div className="relative mt-[3px] ml-[20px] h-[30px] w-[32px]">
          <svg width="20" height="20" viewBox="0 0 20 20"><path d="M0 0h20v17H12.500L9 20v-3H0z" fill="#fff" /><path d="M4 4.500h12M4 8.500h12M4 12.500h8" stroke="#222" strokeWidth="1.300" /></svg>
          <span className="absolute top-[9px] left-[6px] flex h-[21px] w-[26px] items-center justify-center rounded-full border border-[#8a8a8a] bg-[#272423]/85 text-[14.500px] font-semibold">22</span>
        </div>
        <span className="mr-[5px] ml-[13px] h-[50px] w-px bg-[#6e6c6b]" />
      </div>
    </div>
  );
}

export default function App() {
  return (
    <div className="flex h-[1080px] w-[1920px] flex-col overflow-hidden bg-white font-['Open_Sans','Noto_Sans_CJK_TC',sans-serif]">
      <TabStrip />
      <Toolbar />
      <Bookmarks />
      <div className="h-[2px] shrink-0 bg-[#dadce0]" />
      <div className="relative flex h-[901px] shrink-0 overflow-hidden">
        <div className="flex grow bg-[#525659] pl-[501px]"><Document /></div>
        <Scrollbar />
        <div className="pointer-events-none absolute inset-x-0 top-0 mr-[21px] h-[5px] bg-gradient-to-b from-black/40 to-transparent" />
      </div>
      <Taskbar />
    </div>
  );
}
